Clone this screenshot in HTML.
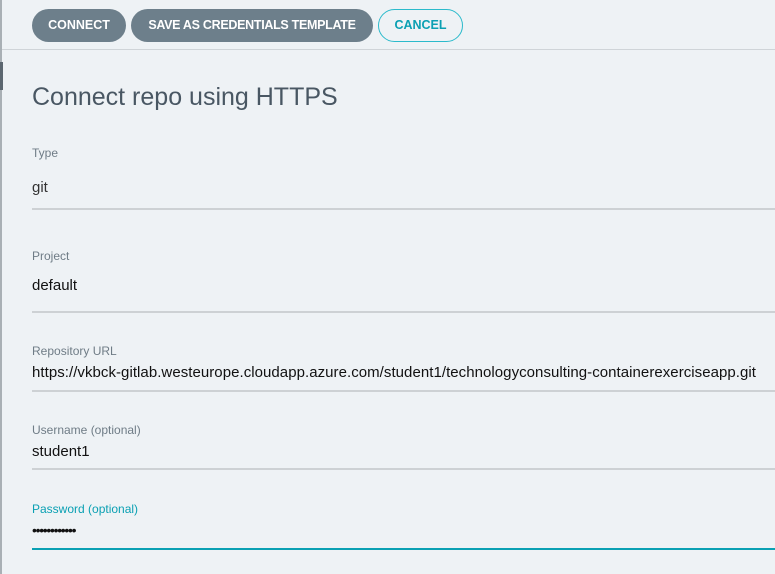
<!DOCTYPE html>
<html><head><style>
body{margin:0;width:775px;height:574px;background:#eef2f5;font-family:"Liberation Sans",sans-serif;position:relative;overflow:hidden}
.a{position:absolute}
.btn{position:absolute;top:9px;height:33px;border-radius:17px;background:#6d7f8b;color:#fff;font-size:12.5px;font-weight:bold;line-height:33px;text-align:center;white-space:nowrap}
.lbl{position:absolute;left:32px;font-size:12px;color:#6f7c86}
.val{position:absolute;left:32px;font-size:15px;color:#111}
.ln{position:absolute;left:32px;right:0;height:2px;background:#cdd1d4}
</style></head><body>
<div class="a" style="left:0;top:0;width:2px;height:574px;background:#a9b0b5"></div>
<div class="a" style="left:0;top:62px;width:3px;height:28px;background:#5c6770"></div>
<div class="btn" style="left:32px;width:94px">CONNECT</div>
<div class="btn" style="left:131px;width:242px;letter-spacing:-0.3px">SAVE AS CREDENTIALS TEMPLATE</div>
<div class="a" style="left:378px;top:9px;width:83px;height:31px;border:1px solid #2bbacb;border-radius:17px;color:#0aa0b3;font-size:12.5px;font-weight:bold;line-height:31px;text-align:center">CANCEL</div>
<div class="a" style="left:2px;right:0;top:49px;height:1px;background:#cfd4d8"></div>
<div class="a" style="left:32px;top:83px;font-size:25px;color:#495763">Connect repo using HTTPS</div>
<div class="lbl" style="top:146px">Type</div>
<div class="val" style="top:179px;color:#333">git</div>
<div class="ln" style="top:208px"></div>
<div class="lbl" style="top:249px">Project</div>
<div class="val" style="top:277px">default</div>
<div class="ln" style="top:311px"></div>
<div class="lbl" style="top:344px">Repository URL</div>
<div class="val" style="top:364px;font-size:15px;white-space:nowrap;letter-spacing:0.05px">https://vkbck-gitlab.westeurope.cloudapp.azure.com/student1/technologyconsulting-containerexerciseapp.git</div>
<div class="ln" style="top:390px"></div>
<div class="lbl" style="top:423px">Username (optional)</div>
<div class="val" style="top:443px">student1</div>
<div class="ln" style="top:468px"></div>
<div class="lbl" style="top:502px;color:#0aa0b3">Password (optional)</div>
<div class="val" style="top:522px;font-size:14px;letter-spacing:-1.3px">••••••••••••</div>
<div class="ln" style="top:548px;background:#0aa0b3"></div>
</body></html>
